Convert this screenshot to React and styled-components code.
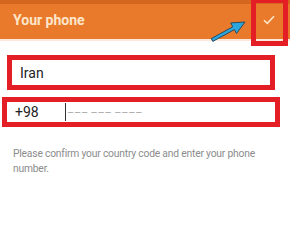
import React from "react";
import styled, { createGlobalStyle } from "styled-components";

const Global = createGlobalStyle`
  html, body { margin: 0; padding: 0; background: #fff; }
  body { font-family: Roboto, "Noto Sans", sans-serif; }
`;

const Screen = styled.div`
  position: relative;
  width: 290px;
  height: 228px;
  overflow: hidden;
  background: #fff;
`;

const StatusStrip = styled.div`
  height: 4px;
  background: #d4661f;
`;

const Toolbar = styled.div`
  height: 35px;
  background: #e97a2c;
  display: flex;
  align-items: center;
  justify-content: space-between;
  padding: 0 0 0 13px;
  border-bottom: 2px solid #fde9dc;
`;

const Title = styled.div`
  color: #fde6c9;
  font-size: 14px;
  font-weight: 700;
  margin-top: -3px;
`;

const CheckButton = styled.div`
  width: 36px;
  height: 35px;
  margin-right: 3px;
  display: flex;
  align-items: center;
  justify-content: center;
  margin-top: -3px;
`;

const Highlight = styled.div`
  position: absolute;
  left: 251px;
  top: -2px;
  width: 27px;
  height: 38px;
  border: 5px solid #e31e25;
  pointer-events: none;
`;

const Arrow = styled.svg`
  position: absolute;
  left: 208px;
  top: 16px;
`;

const Form = styled.div`
  display: flex;
  flex-direction: column;
  padding-top: 14px;
`;

const Field = styled.div`
  box-sizing: border-box;
  margin-left: ${(p) => p.$left}px;
  width: ${(p) => p.$width}px;
  height: ${(p) => p.$height}px;
  margin-bottom: ${(p) => p.$gap || 0}px;
  border: 5px solid #e31e25;
  display: flex;
  align-items: center;
  padding-left: ${(p) => p.$pad}px;
  font-size: 14px;
  color: #222;
`;

const Code = styled.span`
  width: 50px;
`;

const Cursor = styled.span`
  width: 1px;
  height: 18px;
  background: #333;
`;

const Mask = styled.span`
  color: #a9a9a9;
  font-size: 11px;
  letter-spacing: -0.2px;
  margin-left: 1px;
`;

const Hint = styled.p`
  margin: 19px 0 0 13px;
  width: 270px;
  font-size: 10.3px;
  letter-spacing: -0.2px;
  line-height: 15px;
  color: #8c8c8c;
`;

export default function App() {
  return (
    <>
      <Global />
      <Screen>
        <StatusStrip />
        <Toolbar>
          <Title>Your phone</Title>
          <CheckButton>
            <svg width="12" height="10" viewBox="0 0 12 10">
              <path d="M1 5.2 L4.3 8.4 L11 1.3" fill="none" stroke="#fde6c9" strokeWidth="1.6" />
            </svg>
          </CheckButton>
        </Toolbar>
        <Highlight />
        <Arrow width="44" height="28" viewBox="0 0 44 28">
          <path
            d="M3.2 22.6 L24.8 10.8 L22.7 6.9 L37 6 L28.5 17.5 L26.4 13.6 L4.8 25.4 Z"
            fill="#2aa6de"
            stroke="#2b4a5e"
            strokeWidth="1"
            strokeLinejoin="round"
          />
        </Arrow>
        <Form>
          <Field $left={7} $width={268} $height={35} $pad={8} $gap={7}>Iran</Field>
          <Field $left={2} $width={278} $height={30} $pad={8}>
            <Code>+98</Code>
            <Cursor />
            <Mask>––– ––– ––––</Mask>
          </Field>
        </Form>
        <Hint>Please confirm your country code and enter your phone number.</Hint>
      </Screen>
    </>
  );
}
